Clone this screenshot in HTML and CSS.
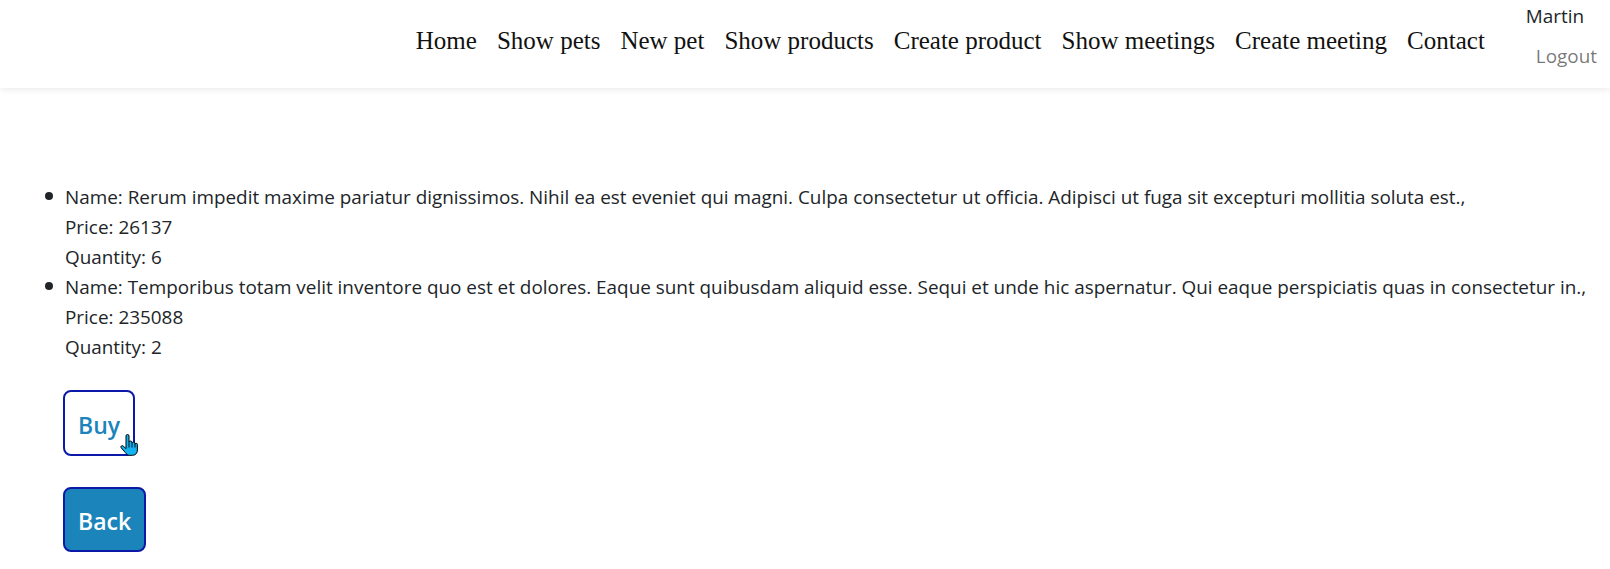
FILE: index.html
```html
<!DOCTYPE html>
<html lang="en">
<head>
<meta charset="utf-8">
<title>Cart</title>
<link rel="stylesheet" href="styles.css">
</head>
<body>
<header class="topbar">
  <nav class="nav">
    <a class="nav-link" href="#">Home</a>
    <a class="nav-link" href="#">Show pets</a>
    <a class="nav-link" href="#">New pet</a>
    <a class="nav-link" href="#">Show products</a>
    <a class="nav-link" href="#">Create product</a>
    <a class="nav-link" href="#">Show meetings</a>
    <a class="nav-link" href="#">Create meeting</a>
    <a class="nav-link" href="#">Contact</a>
  </nav>
  <div class="user">
    <span class="user-name">Martin</span>
    <a class="logout" href="#">Logout</a>
  </div>
</header>
<main class="content">
  <ul class="products">
    <li class="product">Name: Rerum impedit maxime pariatur dignissimos. Nihil ea est eveniet qui magni. Culpa consectetur ut officia. Adipisci ut fuga sit excepturi mollitia soluta est.,<br>Price: 26137<br>Quantity: 6</li>
    <li class="product">Name: Temporibus totam velit inventore quo est et dolores. Eaque sunt quibusdam aliquid esse. Sequi et unde hic aspernatur. Qui eaque perspiciatis quas in consectetur in.,<br>Price: 235088<br>Quantity: 2</li>
  </ul>
  <div class="actions">
    <button class="btn btn-outline" type="button">Buy<svg class="cursor" viewBox="0 0 18 22" width="18" height="22" aria-hidden="true"><path d="M6 2a1.5 1.5 0 0 1 3 0V8.5a1.5 1.5 0 0 1 3 0V9.5a1.5 1.5 0 0 1 3 0V10.5a1.2 1.2 0 0 1 2.4 0V16C17.4 19 15.6 21.3 12.6 21.3H9.6C7.6 21.3 6.6 20.3 5.1 18.3L1.2 13.8a1.3 1.3 0 0 1 2-1.7L6 14.6Z" fill="#13b2f0" stroke="#000" stroke-width="1" stroke-linejoin="round"/><path d="M9 9v4.5M12 10v3.5M15 10.5v3" stroke="#000" stroke-width="0.9" fill="none"/></svg></button>
    <button class="btn btn-solid" type="button">Back</button>
  </div>
</main>
</body>
</html>
```
FILE: styles.css
```css
html, body {
  margin: 0;
  padding: 0;
  background: #ffffff;
}

body {
  font-family: "Open Sans", "Noto Sans", "Liberation Sans", sans-serif;
  font-size: 18.9px;
  line-height: 30px;
  color: #212529;
}

.topbar {
  height: 88px;
  display: flex;
  justify-content: flex-end;
  align-items: flex-start;
  padding-right: 3px;
  box-shadow: 0 2px 6px rgba(0, 0, 0, 0.08);
  position: relative;
}

.nav {
  display: flex;
  gap: 20px;
  margin-top: 27px;
  margin-right: 41px;
}

.nav-link {
  font-family: "Liberation Serif", "Times New Roman", serif;
  font-size: 25px;
  line-height: 28px;
  color: #111111;
  text-decoration: none;
}

.user {
  display: flex;
  flex-direction: column;
  align-items: flex-start;
  padding-top: 1px;
}

.user-name {
  color: #212529;
  line-height: 30px;
}

.logout {
  padding: 10px 10px;
  color: rgba(0, 0, 0, 0.55);
  text-decoration: none;
  line-height: 30px;
}

.content {
  padding-top: 94px;
}

.products {
  margin: 0;
  padding-left: 65px;
  list-style: none;
  white-space: nowrap;
}

.product::before {
  content: "";
  display: inline-block;
  width: 8px;
  height: 8px;
  border-radius: 50%;
  background: #212529;
  margin-left: -20px;
  margin-right: 12px;
  vertical-align: 4px;
}

.actions {
  display: flex;
  flex-direction: column;
  align-items: flex-start;
  gap: 31px;
  padding-left: 63px;
  margin-top: 28px;
}

.btn {
  position: relative;
  height: 66px;
  padding: 0 13px;
  border: 2px solid #0b19a8;
  border-radius: 8px;
  font-family: "Open Sans", "Noto Sans", sans-serif;
  font-weight: 600;
  font-size: 23px;
  line-height: 30px;
  padding-top: 3px;
  cursor: pointer;
}

.btn-outline {
  background: #ffffff;
  color: #1a84bb;
}

.btn-solid {
  height: 65px;
  background: #1a84bb;
  color: #ffffff;
}

.cursor {
  position: absolute;
  left: 55px;
  top: 42px;
}
```
